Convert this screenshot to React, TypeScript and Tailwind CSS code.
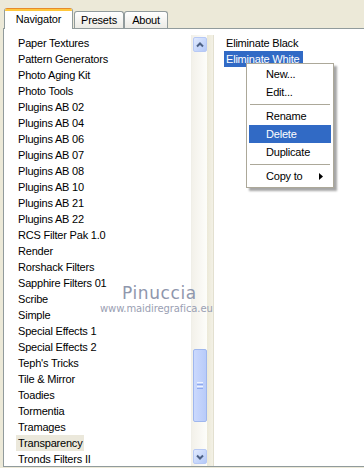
import React from 'react';

const plugins = [
  'Paper Textures',
  'Pattern Generators',
  'Photo Aging Kit',
  'Photo Tools',
  'Plugins AB 02',
  'Plugins AB 04',
  'Plugins AB 06',
  'Plugins AB 07',
  'Plugins AB 08',
  'Plugins AB 10',
  'Plugins AB 21',
  'Plugins AB 22',
  'RCS Filter Pak 1.0',
  'Render',
  'Rorshack Filters',
  'Sapphire Filters 01',
  'Scribe',
  'Simple',
  'Special Effects 1',
  'Special Effects 2',
  "Teph's Tricks",
  'Tile & Mirror',
  'Toadies',
  'Tormentia',
  'Tramages',
  'Transparency',
  'Tronds Filters II',
];

const ScrollButton = ({ dir }: { dir: 'up' | 'down' }) => (
  <div className="h-[15px] w-[14px] mx-auto rounded-[2px] border border-[#b7c9f5] bg-gradient-to-br from-[#e1eafe] to-[#b4c9f8] flex items-center justify-center">
    <svg width="8" height="6" viewBox="0 0 8 6">
      <path
        d={dir === 'up' ? 'M1 4.5 L4 1.5 L7 4.5' : 'M1 1.5 L4 4.5 L7 1.5'}
        fill="none"
        stroke="#4d6185"
        strokeWidth="2"
      />
    </svg>
  </div>
);

const MenuItem = ({ label, active, arrow }: { label: string; active?: boolean; arrow?: boolean }) => (
  <div
    className={
      'h-[18px] flex items-center pl-[17px] pr-[8px] ' +
      (active ? 'bg-[#316ac5] text-white' : 'text-black')
    }
  >
    <span className="flex-1">{label}</span>
    {arrow && (
      <svg width="4" height="7" viewBox="0 0 4 7">
        <path d="M0 0 L4 3.5 L0 7 Z" fill="#000" />
      </svg>
    )}
  </div>
);

const Separator = () => (
  <div className="h-[6px] flex items-center px-[1px]">
    <div className="h-px w-full bg-[#aca899]" />
  </div>
);

export default function App() {
  return (
    <div
      className="relative w-[364px] h-[468px] overflow-hidden bg-[#ece9d8] text-[11px] tracking-[-0.2px] text-black"
      style={{ fontFamily: '"Liberation Sans", Arial, sans-serif' }}
    >
      {/* Tabs */}
      <div className="h-[28px] pl-[4px] flex items-end">
        <div className="relative z-10 -mb-px h-[21px] w-[69px] bg-white border-x border-[#919b9c] rounded-t-[3px] overflow-hidden flex flex-col">
          <div className="h-[1px] bg-[#e68b2c]" />
          <div className="h-[2px] bg-[#ffc73c]" />
          <div className="flex-1 flex items-center justify-center pb-[2px]">Navigator</div>
        </div>
        <div className="h-[17px] w-[50px] ml-[1px] border-t border-x border-[#919b9c] rounded-t-[3px] bg-gradient-to-b from-white to-[#ecebe5] flex items-center justify-center">
          Presets
        </div>
        <div className="h-[17px] w-[44px] border-t border-x border-[#919b9c] rounded-t-[3px] bg-gradient-to-b from-white to-[#ecebe5] flex items-center justify-center">
          About
        </div>
      </div>

      {/* Panel */}
      <div className="ml-[3px] h-[439px] bg-white border-t border-l border-b border-[#919b9c] pt-[6px] flex">
        {/* Left list */}
        <div className="w-[187px] overflow-hidden">
          {plugins.map((p) => (
            <div key={p} className="h-[16px] flex items-center pl-[12px]">
              <span
                className={
                  'px-[2px] leading-[16px] ' + (p === 'Transparency' ? 'bg-[#ebe8db]' : '')
                }
              >
                {p}
              </span>
            </div>
          ))}
        </div>

        {/* Scrollbar */}
        <div className="w-[16px] bg-gradient-to-r from-[#f3f1ea] to-[#fdfdfa] border-l border-[#f0efe8] pt-[2px] pb-[2px] flex flex-col">
          <ScrollButton dir="up" />
          <div className="h-[297px] shrink-0" />
          <div className="h-[73px] w-[14px] mx-auto rounded-[2px] border border-[#9fb7ee] bg-gradient-to-r from-[#cbd9fd] to-[#b8cbf9] flex flex-col items-center justify-center gap-[1px]">
            <div className="h-px w-[6px] bg-[#eef3ff]" />
            <div className="h-px w-[6px] bg-[#8faaf0]" />
            <div className="h-px w-[6px] bg-[#eef3ff]" />
            <div className="h-px w-[6px] bg-[#8faaf0]" />
          </div>
          <div className="flex-1" />
          <ScrollButton dir="down" />
        </div>

        {/* Splitter */}
        <div className="w-[7px] bg-gradient-to-r from-[#ece9d8] to-[#f3f1e6] border-r border-[#e3e0d0]" />

        {/* Right list */}
        <div className="flex-1 pl-[10px]">
          <div className="h-[16px] flex items-center">
            <span className="px-[2px] leading-[16px]">Eliminate Black</span>
          </div>
          <div className="h-[16px] flex items-center">
            <span className="px-[2px] pr-[4px] leading-[16px] bg-[#316ac5] text-white">Eliminate White</span>
          </div>
        </div>
      </div>

      {/* Watermark */}
      <div
        className="absolute left-[122px] top-[281px] text-[17px] tracking-[0.6px] text-[#8f97ad]"
        style={{ fontFamily: '"DejaVu Sans", sans-serif' }}
      >
        Pinuccia
      </div>
      <div
        className="absolute left-[100px] top-[301px] text-[10px] tracking-[-0.1px] text-[#9aa0b3]"
        style={{ fontFamily: '"DejaVu Sans", sans-serif' }}
      >
        www.maidiregrafica.eu
      </div>

      {/* Context menu */}
      <div className="absolute left-[246px] top-[63px] w-[88px] bg-white border border-[#aca899] p-[2px] pt-[1px] shadow-[3px_3px_2px_rgba(0,0,0,0.35)]">
        <MenuItem label="New..." />
        <MenuItem label="Edit..." />
        <Separator />
        <MenuItem label="Rename" />
        <MenuItem label="Delete" active />
        <MenuItem label="Duplicate" />
        <Separator />
        <MenuItem label="Copy to" arrow />
      </div>
    </div>
  );
}
